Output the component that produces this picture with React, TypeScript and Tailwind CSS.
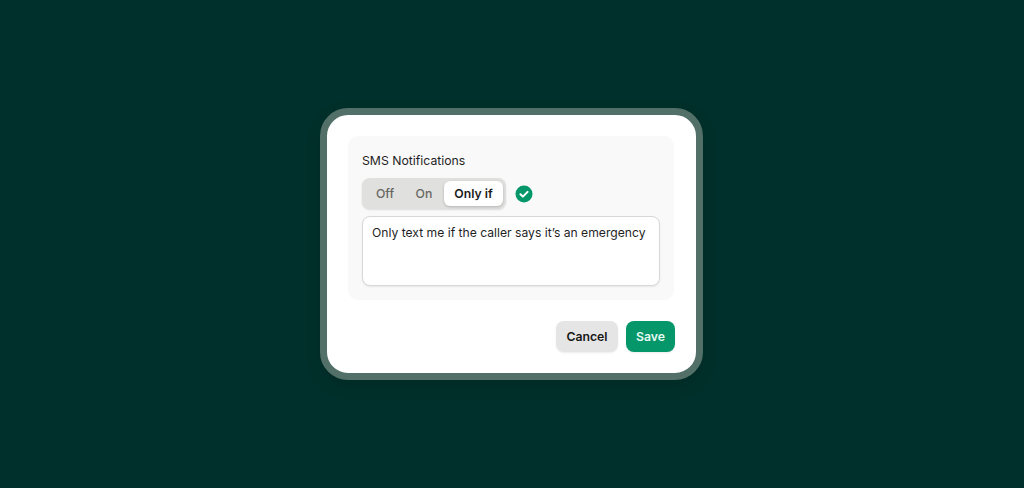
import React from "react";

export default function App() {
  return (
    <div className="flex h-[488px] w-[1024px] items-center justify-center bg-[#00302b] pr-[1px] font-['Inter',sans-serif]">
      <div className="w-[383px] rounded-[28px] border-[7px] border-[#527068] bg-white p-[21px] shadow-[0_6px_16px_rgba(0,0,0,0.12)]">
        <div className="mr-[1px] flex flex-col rounded-[10px] bg-[#f9f9f9] px-[14px] pt-[15px] pb-[14px]">
          <div className="text-[12.25px] leading-[20px] font-normal text-[#1f1f1f]">SMS Notifications</div>
          <div className="mt-[7px] flex items-center gap-[9px]">
            <div className="flex h-[31px] items-center rounded-[8px] bg-[#e0e0de] p-[3px] text-[12.25px] font-medium shadow-[0_1px_2px_rgba(0,0,0,0.12)]">
              <div className="w-[40px] pt-[1px] text-center text-[#666662]">Off</div>
              <div className="mr-[1px] w-[38px] pt-[1px] text-center text-[#666662]">On</div>
              <div className="flex h-[25px] w-[59px] items-center justify-center rounded-[6px] bg-white pt-[1px] font-semibold text-[#1c1c1c] shadow-[0_1px_3px_rgba(0,0,0,0.2)]">Only if</div>
            </div>
            <svg width="18" height="18" viewBox="0 0 18 18" aria-hidden="true">
              <circle cx="9" cy="9" r="8.5" fill="#059669" />
              <path d="M5.4 9.2l2.5 2.4 4.7-4.7" fill="none" stroke="#fff" strokeWidth="2" strokeLinecap="round" strokeLinejoin="round" />
            </svg>
          </div>
          <div className="mt-[7px] h-[70px] rounded-[8px] border border-[#d8d8d8] bg-white px-[9px] pt-[7px] text-[12.15px] leading-[18px] whitespace-nowrap text-[#1f1f1f] shadow-[0_1px_2px_rgba(0,0,0,0.08)]">
            Only text me if the caller says it’s an emergency
          </div>
        </div>
        <div className="mt-[21px] flex justify-end gap-[8px]">
          <div className="flex h-[31px] w-[62px] items-center justify-center rounded-[8px] bg-[#e5e5e5] pt-[1px] text-[12.25px] font-semibold text-[#171717] shadow-[0_1px_2px_rgba(0,0,0,0.08)]">Cancel</div>
          <div className="flex h-[31px] w-[49px] items-center justify-center rounded-[8px] bg-[#059669] pt-[1px] text-[12.25px] font-semibold text-[#e6fbf2] shadow-[0_1px_2px_rgba(0,0,0,0.08)]">Save</div>
        </div>
      </div>
    </div>
  );
}
